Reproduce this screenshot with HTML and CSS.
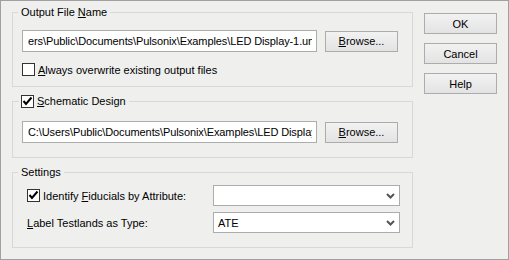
FILE: index.html
```html
<!DOCTYPE html>
<html lang="en">
<head>
    <meta charset="UTF-8">
    <title>Output File</title>
    <link rel="stylesheet" href="styles.css">
</head>
<body>
    <div class="dialog">
        <div class="main">
            <fieldset class="group group-output">
                <legend>Output File <u>N</u>ame</legend>
                <div class="path-row">
                    <input class="textbox" type="text" readonly value="ers\Public\Documents\Pulsonix\Examples\LED Display-1.uni">
                    <button class="btn browse"><u>B</u>rowse...</button>
                </div>
                <label class="check-row">
                    <span class="checkbox"></span>
                    <span><u>A</u>lways overwrite existing output files</span>
                </label>
            </fieldset>

            <fieldset class="group group-schematic">
                <legend class="check-legend">
                    <span class="checkbox">
                        <svg width="11" height="11" viewBox="0 0 11 11"><polyline points="1.5,5 4,8 9.5,1.5" fill="none" stroke="#000" stroke-width="2"/></svg>
                    </span>
                    <span><u>S</u>chematic Design</span>
                </legend>
                <div class="path-row">
                    <input class="textbox" type="text" readonly value="C:\Users\Public\Documents\Pulsonix\Examples\LED Display-1.sch">
                    <button class="btn browse"><u>B</u>rowse...</button>
                </div>
            </fieldset>

            <fieldset class="group group-settings">
                <legend>Settings</legend>
                <div class="settings-grid">
                    <label class="check-row">
                        <span class="checkbox">
                            <svg width="11" height="11" viewBox="0 0 11 11"><polyline points="1.5,5 4,8 9.5,1.5" fill="none" stroke="#000" stroke-width="2"/></svg>
                        </span>
                        <span>Identify <u>F</u>iducials by Attribute:</span>
                    </label>
                    <div class="combo">
                        <span></span>
                        <svg width="9" height="6" viewBox="0 0 9 6"><polyline points="1,1 4.5,4.5 8,1" fill="none" stroke="#555" stroke-width="2"/></svg>
                    </div>
                    <span class="field-label"><u>L</u>abel Testlands as Type:</span>
                    <div class="combo">
                        <span>ATE</span>
                        <svg width="9" height="6" viewBox="0 0 9 6"><polyline points="1,1 4.5,4.5 8,1" fill="none" stroke="#555" stroke-width="2"/></svg>
                    </div>
                </div>
            </fieldset>
        </div>

        <div class="actions">
            <button class="btn action">OK</button>
            <button class="btn action">Cancel</button>
            <button class="btn action">Help</button>
        </div>
    </div>
</body>
</html>
```

FILE: styles.css
```css
body {
    margin: 0;
    font-family: "Liberation Sans", Arial, sans-serif;
    font-size: 11px;
    color: #000;
}
.dialog {
    box-sizing: border-box;
    width: 509px;
    height: 260px;
    display: flex;
    padding: 5px 11px 0 11px;
    background: #eff0ee;
    border: 1px solid #a0a0a0;
}
.main {
    width: 401px;
}
.group {
    margin: 0;
    border: 1px solid #d8d9d7;
    padding: 11px 14px 10px 9px;
    min-width: 0;
}
.group legend {
    margin-left: -4px;
    padding: 0 3px;
    line-height: 13px;
    height: 13px;
}
.group-schematic {
    margin-top: 8px;
    padding: 13px 14px 14px 9px;
}
.group-settings {
    margin-top: 8px;
    padding: 6px 12px 14px 14px;
}
.group-settings legend {
    margin-left: -9px;
}
.check-legend {
    display: flex;
    align-items: center;
    gap: 3px;
}
.group-schematic .check-legend {
    margin-left: -3px;
    padding: 0 3px 0 2px;
}
.path-row {
    display: flex;
    align-items: center;
    gap: 8px;
}
.textbox {
    box-sizing: border-box;
    width: 295px;
    height: 22px;
    margin: 0;
    padding: 0 4px 0 5px;
    border: 1px solid #abadab;
    background: #fff;
    font: inherit;
    letter-spacing: -0.1px;
    color: #000;
    outline: none;
}
.btn {
    box-sizing: border-box;
    height: 21px;
    width: 73px;
    margin: 0;
    padding: 0;
    border: 1px solid #acacac;
    background: linear-gradient(#f2f2f2, #e3e3e3);
    font: inherit;
    color: #000;
}
.check-row {
    display: flex;
    align-items: center;
    gap: 3px;
    height: 13px;
    margin-top: 11px;
}
.checkbox {
    box-sizing: border-box;
    width: 13px;
    height: 13px;
    border: 1px solid #333;
    background: #fff;
    display: inline-flex;
    align-items: center;
    justify-content: center;
    flex: none;
}
.settings-grid {
    display: grid;
    grid-template-columns: 186px 187px;
    row-gap: 6px;
    align-items: center;
}
.settings-grid .check-row {
    margin-top: 0;
}
.combo {
    box-sizing: border-box;
    height: 21px;
    border: 1px solid #acacac;
    background: #fff;
    display: flex;
    align-items: center;
    justify-content: space-between;
    padding: 0 4px 0 4px;
}
.actions {
    display: flex;
    flex-direction: column;
    gap: 9px;
    margin: 7px 0 0 11px;
}
```
